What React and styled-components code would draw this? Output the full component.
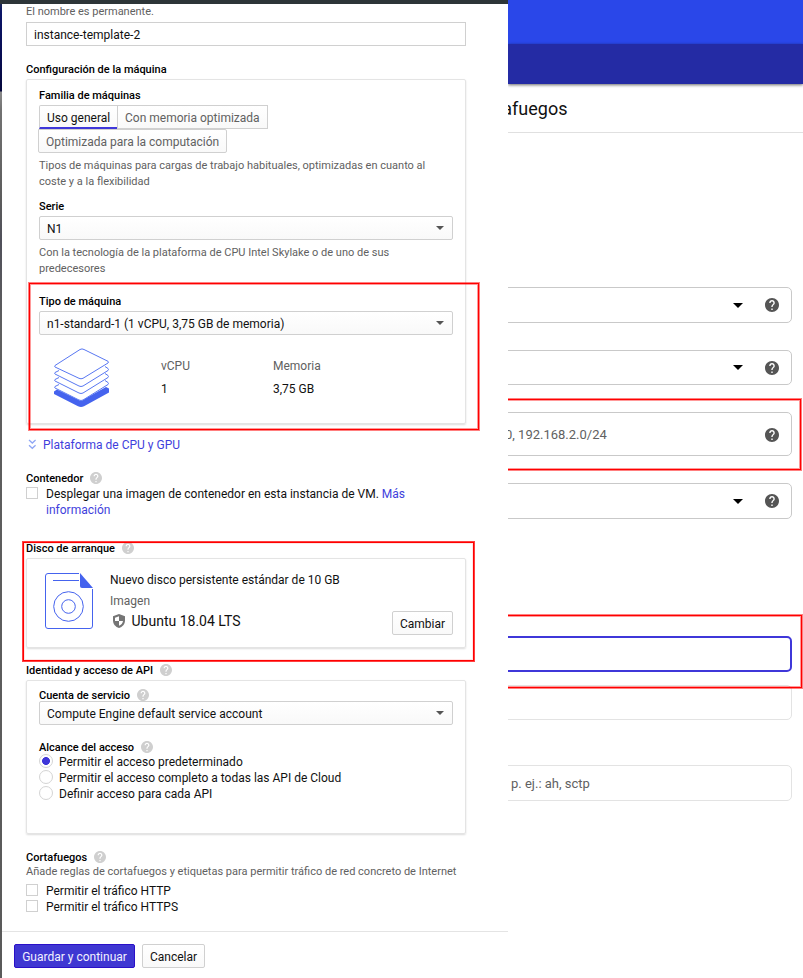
import React from "react";
import styled, { createGlobalStyle, css } from "styled-components";

const GlobalStyle = createGlobalStyle`
  * { box-sizing: border-box; }
  html, body { margin: 0; padding: 0; background: #fff; overflow: hidden; }
  body { font-family: Roboto, sans-serif; font-size: 12px; line-height: 16px; color: #111; }
`;

const Page = styled.div`
  position: relative;
  display: flex;
  width: 803px;
  height: 978px;
  overflow: hidden;
  background: #fff;
`;

const Backdrop = styled.div`
  flex: none;
  width: 2px;
  background: linear-gradient(#23304a 0, #0b1568 12px, #080c50 60px, #05083c 91px, #8a8a8a 92px, #727272 110px, #5c5c5c 200px, #50505a 240px, #5f5f5f 330px, #5a5a5a 100%);
`;

const Panel = styled.section`
  display: flex;
  flex-direction: column;
  flex: none;
  width: 506px;
  height: 978px;
  background: #fff;
`;

const TopStrip = styled.div`
  flex: none;
  height: 4px;
  margin-left: -2px;
  background: #2d3538;
`;

const Form = styled.div`
  display: flex;
  flex-direction: column;
  height: 927px;
  padding: 0 42px 0 24px;
`;

const Hint = styled.p`
  flex: none;
  margin: ${(p) => p.$mt || 0}px 0 0;
  font-size: 11px;
  line-height: 16px;
  color: #616161;
  white-space: pre-line;
`;

const LabelRow = styled.div`
  flex: none;
  display: flex;
  align-items: center;
  gap: 7px;
  height: 16px;
  margin-top: ${(p) => p.$mt || 0}px;
  font-size: 11px;
  font-weight: 500;
  color: #000;
`;

const LabelText = styled.span`
  padding-top: 2px;
`;

const TextInput = styled.div`
  flex: none;
  height: 24px;
  margin-top: 2px;
  padding: 1px 7px 0;
  line-height: 22px;
  border: 1px solid #d0d0d0;
`;

const Card = styled.div`
  flex: none;
  display: flex;
  flex-direction: ${(p) => (p.$row ? "row" : "column")};
  height: ${(p) => p.$h}px;
  margin-top: 2px;
  padding: ${(p) => p.$pad || "7px 12px 0"};
  border: 1px solid #e4e4e4;
  border-radius: 2px;
  box-shadow: 0 1px 2px rgba(0, 0, 0, 0.14);
`;

const buttonFace = css`
  height: 24px;
  padding: 1px 7px 0;
  line-height: 22px;
  border: 1px solid #d0d0d0;
  background: linear-gradient(#fff, #f9f9f9);
  white-space: nowrap;
`;

const Tabs = styled.div`
  flex: none;
  display: flex;
  flex-wrap: wrap;
  margin-top: 2px;
`;

const Tab = styled.div`
  ${buttonFace}
  width: ${(p) => p.$w}px;
  margin-left: ${(p) => p.$ml || 0}px;
  color: ${(p) => (p.$active ? "#111" : "#616161")};
  border-radius: ${(p) => p.$radius || "0"};
  ${(p) => p.$active && "border-bottom: 2px solid #3f37d9;"}
`;

const Select = styled.div`
  ${buttonFace}
  flex: none;
  display: flex;
  align-items: center;
  justify-content: space-between;
  margin-top: ${(p) => p.$mt}px;
  padding-right: 8px;
  border-radius: 2px;
`;

const Caret = styled.i`
  flex: none;
  width: 0;
  height: 0;
  margin-bottom: ${(p) => p.$lift || 0}px;
  border-left: ${(p) => p.$size || 4}px solid transparent;
  border-right: ${(p) => p.$size || 4}px solid transparent;
  border-top: ${(p) => p.$size || 4}px solid ${(p) => p.$color || "#555"};
`;

const MachineSpecs = styled.div`
  display: grid;
  grid-template-columns: 107px 112px 1fr;
  margin-top: 12px;
  padding-left: 15px;
`;

const Spec = styled.div`
  display: flex;
  flex-direction: column;
  gap: 7px;
  padding-top: 11px;
`;

const Muted = styled.span`
  color: #616161;
`;

const Link = styled.span`
  color: #3f3fdc;
`;

const Expander = styled.div`
  flex: none;
  display: flex;
  align-items: center;
  gap: 7px;
  height: 16px;
  margin-top: 13px;
  padding-left: 2px;
  color: #3f3fdc;
`;

const Option = styled.div`
  flex: none;
  display: flex;
  gap: 8px;
  min-height: 16px;
  margin-top: ${(p) => p.$mt || 0}px;
`;

const Checkbox = styled.i`
  flex: none;
  width: 12px;
  height: 12px;
  margin-top: 1px;
  border: 1px solid #d0d0d0;
`;

const Radio = styled.i`
  flex: none;
  width: 14px;
  height: 14px;
  margin-right: -2px;
  border: 1px solid #d4d4d4;
  border-radius: 50%;
  background: ${(p) => (p.$on ? "radial-gradient(circle, #3f37d9 3.6px, #fff 4.3px)" : "#fff")};
`;

const DiskCell = styled.div`
  flex: none;
  padding-top: 14px;
`;

const DiskInfo = styled.div`
  flex: 1;
  display: flex;
  flex-direction: column;
  padding: 13px 0 0 17px;
`;

const ImageLabel = styled(Muted)`
  margin-top: 5px;
`;

const ImageName = styled.div`
  display: flex;
  align-items: center;
  gap: 6.5px;
  height: 18px;
  margin-top: 3px;
  padding-left: 3px;
  font-size: 14px;
`;

const Button = styled.button`
  ${buttonFace}
  flex: none;
  font-family: inherit;
  font-size: 12px;
  color: #111;
  width: ${(p) => p.$w}px;
  border-radius: 2px;
  ${(p) => p.$low && "margin-top: 52px;"}
  ${(p) => p.$primary && "background: #3f37d2; border-color: #2a10c8; color: #f2f1ff;"}
`;

const Footer = styled.footer`
  display: flex;
  gap: 7px;
  height: 47px;
  padding: 12px 0 0 12px;
  border-top: 1px solid #e4e4e4;
`;

const Side = styled.section`
  flex: none;
  display: flex;
  flex-direction: column;
  width: 295px;
  height: 978px;
  overflow: hidden;
`;

const AppBar = styled.div`
  flex: none;
  height: 44px;
  background: #2a47e9;
`;

const SubBar = styled.div`
  flex: none;
  height: 40px;
  background: #242ba4;
  box-shadow: 0 1px 3px rgba(0, 0, 0, 0.6);
`;

const Heading = styled.h1`
  flex: none;
  height: 49px;
  margin: 0 0 154px;
  border-bottom: 1px solid #e0e0e0;
  font-size: 18px;
  font-weight: 400;
  line-height: 49px;
  color: #111;
`;

const TitleClip = styled.div`
  display: flex;
  justify-content: flex-end;
  width: 59.5px;
  overflow: hidden;
`;

const Field = styled.div`
  flex: none;
  display: flex;
  align-items: center;
  justify-content: flex-end;
  gap: 22px;
  width: 294px;
  height: ${(p) => p.$h || 36}px;
  margin: ${(p) => p.$mt || 0}px 0 0 -10px;
  padding-right: 12px;
  border: ${(p) => (p.$focus ? "2px solid #3f37d9" : p.$light ? "1px solid #e3e3e3" : "1px solid #c9c9c9")};
  border-radius: 5px;
  font-size: 13px;
  color: #616161;
  ${(p) => p.$tall && "svg { margin-top: 2px; }"}
`;

const FieldText = styled.span`
  flex: 1;
  padding: 2px 0 0 ${(p) => p.$pl}px;
  white-space: nowrap;
`;

const Highlight = styled.div`
  position: absolute;
  left: ${(p) => p.$x}px;
  top: ${(p) => p.$y}px;
  width: ${(p) => p.$w}px;
  height: ${(p) => p.$h}px;
  border: 1px solid #f00;
  box-shadow: 0 0 0 1px rgba(255, 0, 0, ${(p) => (p.$thin ? 0.75 : 0.5)}), inset 0 0 0 1px rgba(255, 0, 0, ${(p) => (p.$thin ? 0.1 : 0.4)});
  pointer-events: none;
  ${(p) => p.$open && "clip-path: inset(-2px -2px -2px 4px);"}
`;

const Help = ({ size = 12, color = "#cfcfcf" }) => (
  <svg width={size} height={size} viewBox="2 2 20 20">
    <path fill={color} d="M12 2C6.48 2 2 6.48 2 12s4.48 10 10 10 10-4.48 10-10S17.52 2 12 2zm1 17h-2v-2h2v2zm2.07-7.75l-.9.92C13.45 12.9 13 13.5 13 15h-2v-.5c0-1.1.45-2.1 1.17-2.83l1.24-1.26c.37-.36.59-.86.59-1.41 0-1.1-.9-2-2-2s-2 .9-2 2H8c0-2.21 1.79-4 4-4s4 1.79 4 4c0 .88-.36 1.68-.93 2.25z" />
  </svg>
);

const StackIcon = () => (
  <svg width="56" height="61" viewBox="0 -1 56 61" fill="none" stroke="#5877f2" strokeWidth="1" strokeLinejoin="round">
    <path fill="#4563ee" stroke="none" d="M0 43.500L3 41.500 27 53 52 39 55 40.500V44.500L30 58.200Q27 59.800 24 58.200L0 46Z" />
    {[38.5, 31.5, 24.5].map((y) => (
      <path key={y} fill="#fff" d={`M5 ${y - 2}L1 ${y}Q.2 ${y + 1} 1 ${y + 1.5}L25 ${y + 13.5}Q27 ${y + 14.5} 29 ${y + 13.5}L54 ${y - 2}Q55 ${y - 3} 54 ${y - 4}L51 ${y - 6}`} />
    ))}
    <path fill="#fff" d="M1 17.500L26 1.500Q28 .3 30 1.500L54 13.300Q55 14 54 15L29 30.300Q27 31.300 25 30.300L1 19Q.2 18.300 1 17.500Z" />
  </svg>
);

const DiskIcon = () => (
  <svg width="48" height="56" viewBox="0 0 48 56" fill="none" stroke="#4563ee">
    <path d="M34 .5H3Q.5.5.5 3V53Q.5 55.500 3 55.500H45Q47.500 55.500 47.500 53V16M8 7.500H34" />
    <path fill="#4563ee" stroke="none" d="M35 0V13Q35 15 37 15H48Z" />
    <circle cx="23.500" cy="33.500" r="14.800" />
    <circle cx="23.500" cy="33.500" r="6.800" />
  </svg>
);

const ShieldIcon = () => (
  <svg width="12" height="14" viewBox="0 0 12 14">
    <path fill="#757575" d="M6 0L12 2.300V6.500C12 10 9.500 13 6 14 2.500 13 0 10 0 6.500V2.300Z" />
    <path fill="#fff" d="M6 2.200V7H2V3.700ZM6 7H10C9.800 9.300 8 11.100 6 11.800Z" />
  </svg>
);

const Chevrons = () => (
  <svg width="8" height="12" viewBox="0 0 8 12" fill="none" stroke="#8fa6f4" strokeWidth="1.300">
    <path d="M1 1L4.300 4 7.600 1M1 6.300L4.300 9.300 7.600 6.300" />
  </svg>
);

const Label = ({ children, mt, help }) => (
  <LabelRow $mt={mt}><LabelText>{children}</LabelText>{help && <Help />}</LabelRow>
);

const SelectBox = ({ children, mt = 2 }) => (
  <Select $mt={mt}>{children}<Caret $lift={2} /></Select>
);

const DropField = ({ mt, h }) => (
  <Field $mt={mt} $h={h}><Caret $size={5} $color="#000" /><Help size={14} color="#555" /></Field>
);

export default function App() {
  return (
    <Page>
      <GlobalStyle />
      <Backdrop />
      <Panel>
        <TopStrip />
        <Form>
          <Hint>El nombre es permanente.</Hint>
          <TextInput>instance-template-2</TextInput>
          <Label mt={15}>Configuración de la máquina</Label>
          <Card $h={345}>
            <Label>Familia de máquinas</Label>
            <Tabs>
              <Tab $w={79} $active $radius="2px 0 0 0">Uso general</Tab>
              <Tab $w={151} $ml={-1}>Con memoria optimizada</Tab>
              <Tab $w={189} $ml={-1} $radius="0 2px 2px 2px">Optimizada para la computación</Tab>
            </Tabs>
            <Hint $mt={5}>{"Tipos de máquinas para cargas de trabajo habituales, optimizadas en cuanto al\ncoste y a la flexibilidad"}</Hint>
            <Label mt={8}>Serie</Label>
            <SelectBox>N1</SelectBox>
            <Hint $mt={5}>{"Con la tecnología de la plataforma de CPU Intel Skylake o de uno de sus\npredecesores"}</Hint>
            <Label mt={16}>Tipo de máquina</Label>
            <SelectBox>n1-standard-1 (1 vCPU, 3,75 GB de memoria)</SelectBox>
            <MachineSpecs>
              <StackIcon />
              <Spec><Muted>vCPU</Muted><span>1</span></Spec>
              <Spec><Muted>Memoria</Muted><span>3,75 GB</span></Spec>
            </MachineSpecs>
          </Card>
          <Expander><Chevrons />Plataforma de CPU y GPU</Expander>
          <Label mt={17} help>Contenedor</Label>
          <Option>
            <Checkbox />
            <span>Desplegar una imagen de contenedor en esta instancia de VM. <Link>Más<br />información</Link></span>
          </Option>
          <Label mt={22} help>Disco de arranque</Label>
          <Card $row $h={90} $pad="0 12px 0 18px">
            <DiskCell><DiskIcon /></DiskCell>
            <DiskInfo>
              <span>Nuevo disco persistente estándar de 10 GB</span>
              <ImageLabel>Imagen</ImageLabel>
              <ImageName><ShieldIcon />Ubuntu 18.04 LTS</ImageName>
            </DiskInfo>
            <Button $w={61} $low>Cambiar</Button>
          </Card>
          <Label mt={14} help>Identidad y acceso de API</Label>
          <Card $h={154} $pad="6px 12px 0">
            <Label help>Cuenta de servicio</Label>
            <SelectBox mt={-2}>Compute Engine default service account</SelectBox>
            <Label mt={14} help>Alcance del acceso</Label>
            <Option $mt={-1}><Radio $on /><span>Permitir el acceso predeterminado</span></Option>
            <Option><Radio /><span>Permitir el acceso completo a todas las API de Cloud</span></Option>
            <Option><Radio /><span>Definir acceso para cada API</span></Option>
          </Card>
          <Label mt={15} help>Cortafuegos</Label>
          <Hint $mt={-1}>Añade reglas de cortafuegos y etiquetas para permitir tráfico de red concreto de Internet</Hint>
          <Option $mt={3}><Checkbox /><span>Permitir el tráfico HTTP</span></Option>
          <Option><Checkbox /><span>Permitir el tráfico HTTPS</span></Option>
        </Form>
        <Footer>
          <Button $primary $w={121}>Guardar y continuar</Button>
          <Button $w={63}>Cancelar</Button>
        </Footer>
      </Panel>
      <Side>
        <AppBar />
        <SubBar />
        <Heading><TitleClip>afuegos</TitleClip></Heading>
        <DropField />
        <DropField mt={27} h={35} />
        <Field $mt={27} $h={44} $tall>
          <FieldText $pl={6}>0, 192.168.2.0/24</FieldText>
          <Help size={14} color="#555" />
        </Field>
        <DropField mt={27} />
        <Field $mt={117} $focus />
        <Field $mt={13} $h={35} $light />
        <Field $mt={45} $light><FieldText $pl={12}>p. ej.: ah, sctp</FieldText></Field>
      </Side>
      <Highlight $x={29} $y={283} $w={450} $h={147} />
      <Highlight $x={504} $y={399} $w={297} $h={71} $open />
      <Highlight $x={23} $y={542} $w={451} $h={119} $thin />
      <Highlight $x={504} $y={615} $w={298} $h={73} $open />
    </Page>
  );
}
